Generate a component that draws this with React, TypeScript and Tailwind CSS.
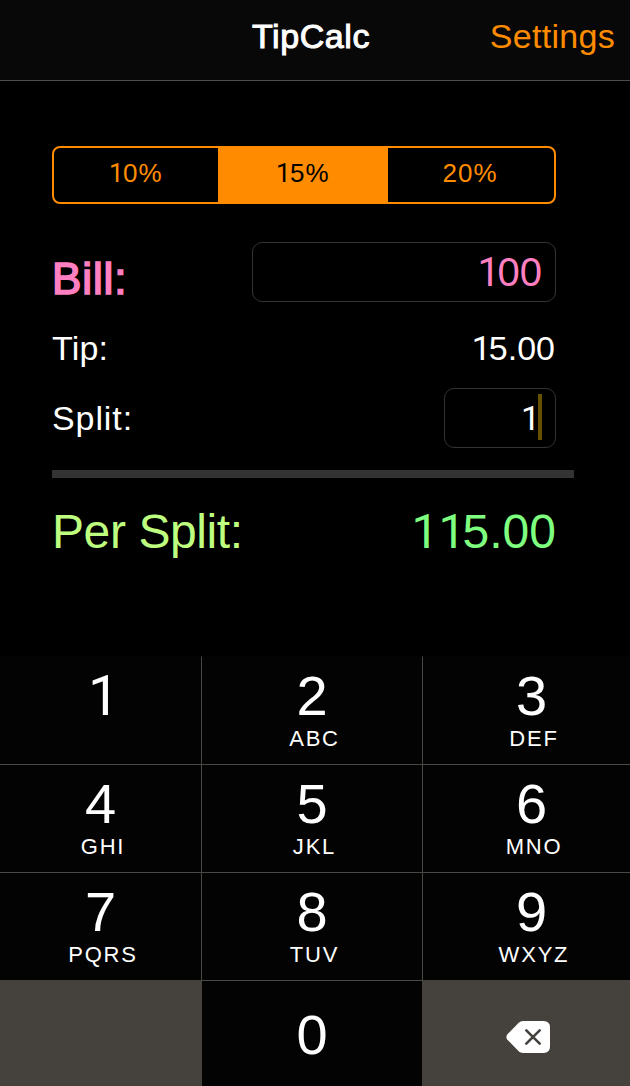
import React, { useState } from "react";

const rates = ["10%", "15%", "20%"];

type KeyDef = { digit: string; letters?: string };

const keys: KeyDef[] = [
  { digit: "1" },
  { digit: "2", letters: "ABC" },
  { digit: "3", letters: "DEF" },
  { digit: "4", letters: "GHI" },
  { digit: "5", letters: "JKL" },
  { digit: "6", letters: "MNO" },
  { digit: "7", letters: "PQRS" },
  { digit: "8", letters: "TUV" },
  { digit: "9", letters: "WXYZ" },
];

// Sets every "1" in a face whose figure one has no foot.
function Figures({ value }: { value: string }) {
  return (
    <span>
      {value.split(/(1+)/).map((part, i) =>
        part.startsWith("1") ? (
          <span key={i} className="-mr-[0.06em] ml-[0.06em] font-[Roboto,sans-serif] leading-none">
            {part}
          </span>
        ) : (
          part
        ),
      )}
    </span>
  );
}

function Key({ digit, letters, index }: KeyDef & { index: number }) {
  const line = index % 3 < 2 ? "border-r border-r-[#4a4843]" : "";
  const top = index > 2 ? "border-t-[#4a4843]" : "border-t-transparent";
  return (
    <button className={`flex flex-col items-center border-t bg-[#030303] pt-[9px] ${top} ${line}`}>
      <span className="text-[56px] leading-[60px]">
        <Figures value={digit} />
      </span>
      {letters && (
        <span className="pl-[5px] text-[22px] leading-[26px] tracking-[1.8px]">{letters}</span>
      )}
    </button>
  );
}

function BackspaceIcon() {
  return (
    <svg width="44" height="32" viewBox="0 0 44 32" fill="none">
      <path
        d="M17 0H37.500Q44 0 44 6.500V25.500Q44 32 37.500 32H17Q14.500 32 12.700 30.300L1 18.300Q-0.200 16 1 13.700L12.700 1.700Q14.500 0 17 0Z"
        fill="#fff"
      />
      <path d="M20.300 9.300L33.700 22.700M33.700 9.300L20.300 22.700" stroke="#45423d" strokeWidth="2.600" strokeLinecap="round" />
    </svg>
  );
}

export default function App() {
  const [selected, setSelected] = useState(1);

  return (
    <div className="flex h-[1086px] w-[630px] flex-col overflow-hidden bg-black font-['Liberation_Sans',Arial,sans-serif] text-white">
      <header className="grid h-[81px] shrink-0 grid-cols-[1fr_auto_1fr] border-b border-[#4d4d4d] bg-[#080808] px-[15px] text-[34px] leading-[72px]">
        <span />
        <h1 className="pr-[8px] tracking-[0.6px] [-webkit-text-stroke:1px_white]">TipCalc</h1>
        <button className="justify-self-end self-start tracking-[0.3px] text-[#ff8c00]">Settings</button>
      </header>

      <main className="flex h-[575px] shrink-0 flex-col pl-[52px] pt-[65px]">
        <div className="grid h-[58px] w-[504px] grid-cols-[164px_170px_166px] overflow-hidden rounded-lg border-2 border-[#ff8c00] text-[26px] leading-[50px] tracking-[1px]">
          {rates.map((rate, i) => (
            <button
              key={rate}
              onClick={() => setSelected(i)}
              className={`flex justify-center pr-[2px] ${i === selected ? "bg-[#ff8c00] text-black" : "text-[#ff8c00]"}`}
            >
              <Figures value={rate} />
            </button>
          ))}
        </div>

        <div className="mt-[38px] flex h-[60px] w-[504px] justify-between">
          <span className="pt-[7px] text-[44px] leading-[60px] tracking-[0.9px] text-[#ff7fc0] [-webkit-text-stroke:1.7px_#ff7fc0]">
            Bill:
          </span>
          <div className="h-[60px] w-[304px] rounded-[10px] border border-[#333] pr-[13px] text-right text-[40px] leading-[58px] text-[#ff7fc0]">
            <Figures value="100" />
          </div>
        </div>

        <div className="mt-4 flex h-[60px] w-[504px] justify-between text-[34px] leading-[60px]">
          <span className="tracking-[0.2px]">Tip:</span>
          <span className="pr-px">
            <Figures value="15.00" />
          </span>
        </div>

        <div className="mt-[10px] flex h-[60px] w-[504px] justify-between text-[34px] leading-[60px]">
          <span className="tracking-[0.9px]">Split:</span>
          <div className="flex h-[60px] w-[112px] justify-end rounded-[10px] border border-[#333] pr-[13px] leading-[58px]">
            <Figures value="1" />
            <span className="mt-[5px] h-[46px] w-1 bg-[#665200]" />
          </div>
        </div>

        <div className="mt-[22px] h-2 w-[522px] shrink-0 bg-[#333]" />

        <div className="mt-[24px] flex h-[60px] w-[504px] justify-between text-[48px] leading-[60px]">
          <span className="tracking-[-0.4px] text-[#bfff7f]">Per Split:</span>
          <span className="text-[#7fff7f]">
            <Figures value="115.00" />
          </span>
        </div>
      </main>

      <div className="grid w-[640px] shrink-0 grid-cols-[202px_221px_217px] grid-rows-[108px_108px_108px_106px]">
        {keys.map((key, i) => (
          <Key key={key.digit} {...key} index={i} />
        ))}
        <div className="bg-[#45423d]" />
        <button className="flex justify-center border-t border-t-[#4a4843] bg-[#030303] pr-px pt-[24px] text-[56px] leading-[60px]">
          0
        </button>
        <button aria-label="Delete" className="-ml-px flex bg-[#45423d] pl-[84px] pt-[41px]">
          <BackspaceIcon />
        </button>
      </div>
    </div>
  );
}
